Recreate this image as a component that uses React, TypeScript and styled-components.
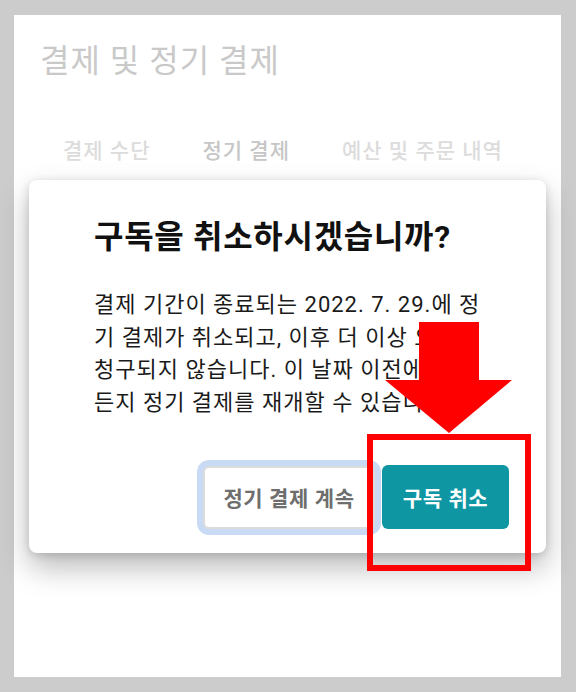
import React from "react";
import styled, { createGlobalStyle } from "styled-components";

const Global = createGlobalStyle`
  html, body { margin: 0; padding: 0; background: #cccccc; }
  body { font-family: Roboto, "Noto Sans CJK KR", "Noto Sans", sans-serif; }
  * { box-sizing: border-box; }
`;

const Stage = styled.div`
  position: relative;
  width: 576px;
  height: 692px;
  padding: 15px 15px 15px 14px;
`;

const Panel = styled.main`
  width: 547px;
  height: 662px;
  background: #ffffff;
  padding: 22px 0 0 26px;
  display: flex;
  flex-direction: column;
`;

const PageTitle = styled.h1`
  margin: 0;
  font-size: 32px;
  line-height: 48px;
  font-weight: 400;
  color: #c9c9c9;
  letter-spacing: 1px;
`;

const Tabs = styled.nav`
  display: flex;
  margin-top: 51px;
  padding-left: 23px;
`;

const Tab = styled.span<{ $active?: boolean }>`
  font-size: 21px;
  line-height: 31px;
  font-weight: 500;
  letter-spacing: 1px;
  color: ${(p) => (p.$active ? "#c6c6c6" : "#dcdcdc")};
  margin-right: 52px;
`;

const Dialog = styled.section`
  position: absolute;
  left: 29px;
  top: 180px;
  width: 517px;
  height: 373px;
  background: #ffffff;
  border-radius: 8px;
  box-shadow: 0 14px 30px rgba(0, 0, 0, 0.28), 0 2px 8px rgba(0, 0, 0, 0.14);
  padding: 36px 37px 24px 65px;
  display: flex;
  flex-direction: column;
`;

const DialogTitle = styled.h2`
  margin: 0;
  font-size: 32px;
  line-height: 42px;
  font-weight: 700;
  color: #111111;
  letter-spacing: 0.7px;
`;

const Body = styled.p`
  margin: 31px 0 0;
  padding-right: 28px;
  font-size: 22px;
  line-height: 32.5px;
  font-weight: 400;
  letter-spacing: 1px;
  color: #1a1a1a;
  word-break: break-all;
`;

const Actions = styled.div`
  margin-top: auto;
  display: flex;
  justify-content: flex-end;
  align-items: center;
  gap: 7px;
`;

const OutlineButton = styled.button`
  width: 172px;
  height: 63px;
  border: 2px solid #dcdcdc;
  border-radius: 6px;
  background: #ffffff;
  box-shadow: 0 0 0 6px #c8daf4;
  font-family: inherit;
  font-size: 21px;
  font-weight: 700;
  letter-spacing: 0.6px;
  color: #6e6e6e;
  padding: 0;
`;

const FilledButton = styled.button`
  width: 127px;
  height: 64px;
  border: none;
  border-radius: 6px;
  background: #0e97a3;
  font-family: inherit;
  font-size: 21px;
  font-weight: 700;
  letter-spacing: 0.6px;
  color: #ffffff;
  padding: 0;
`;

const Arrow = styled.svg`
  position: absolute;
  left: 385px;
  top: 322px;
`;

const Highlight = styled.div`
  position: absolute;
  left: 367px;
  top: 434px;
  width: 164px;
  height: 137px;
  border: 6px solid #ff0000;
`;

export default function App() {
  return (
    <>
      <Global />
      <Stage>
        <Panel>
          <PageTitle>결제 및 정기 결제</PageTitle>
          <Tabs>
            <Tab>결제 수단</Tab>
            <Tab $active>정기 결제</Tab>
            <Tab>예산 및 주문 내역</Tab>
          </Tabs>
        </Panel>
        <Dialog>
          <DialogTitle>구독을 취소하시겠습니까?</DialogTitle>
          <Body>
            결제 기간이 종료되는 2022. 7. 29.에 정기 결제가 취소되고, 이후 더 이상 요금이
            청구되지 않습니다. 이 날짜 이전에 언제든지 정기 결제를 재개할 수 있습니다.
          </Body>
          <Actions>
            <OutlineButton>정기 결제 계속</OutlineButton>
            <FilledButton>구독 취소</FilledButton>
          </Actions>
        </Dialog>
        <Arrow width="128" height="112" viewBox="0 0 128 112">
          <polygon points="34,0 94,0 94,58 127,58 64,111 0,58 34,58" fill="#ff0000" />
        </Arrow>
        <Highlight />
      </Stage>
    </>
  );
}
